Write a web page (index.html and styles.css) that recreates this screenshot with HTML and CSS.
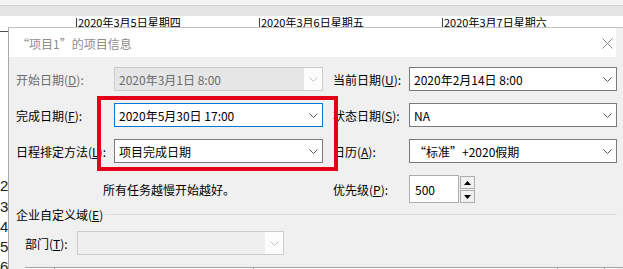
FILE: index.html
```html
<!DOCTYPE html>
<html lang="zh-CN">
<head>
    <meta charset="UTF-8" />
    <title>项目信息</title>
    <link rel="stylesheet" href="styles.css">
</head>
<body>
<div class="top-strip"></div>
<div class="top-band"></div>
<div class="timescale">
    <span class="tick-gap"></span>
    <span class="tick">2020年3月5日星期四</span>
    <span class="tick">2020年3月6日星期五</span>
    <span class="tick">2020年3月7日星期六</span>
    <span class="tick tick-last">2</span>
</div>

<div class="main">
    <div class="rowheads">
        <div class="rh-top"></div>
        <div class="rh-spacer"></div>
        <div class="rh rh-tall">2</div>
        <div class="rh rh-tall">3</div>
        <div class="rh">4</div>
        <div class="rh">5</div>
        <div class="rh">6</div>
    </div>

    <div class="dialog">
        <div class="titlebar">
            <span class="title">“项目1”的项目信息</span>
            <svg class="close" width="11" height="11" viewBox="0 0 11 11">
                <path d="M0.5 0.5 L10.5 10.5 M10.5 0.5 L0.5 10.5" stroke="#8a8a8a" stroke-width="1" fill="none"/>
            </svg>
        </div>

        <div class="dlg-body">
            <div class="form">
                <label class="lbl disabled-text">开始日期(<u>D</u>):</label>
                <div class="combo combo-disabled">
                    <span class="combo-val">2020年3月1日 8:00</span>
                    <span class="combo-btn">
                        <svg width="9" height="5" viewBox="0 0 9 5"><polyline points="0.5,0.5 4.5,4.5 8.5,0.5" fill="none" stroke="#c2c2c2"/></svg>
                    </span>
                </div>
                <span></span>
                <label class="lbl">当前日期(<u>U</u>):</label>
                <div class="combo">
                    <span class="combo-val">2020年2月14日 8:00</span>
                    <span class="combo-btn">
                        <svg width="9" height="5" viewBox="0 0 9 5"><polyline points="0.5,0.5 4.5,4.5 8.5,0.5" fill="none" stroke="#5a5a5a"/></svg>
                    </span>
                </div>

                <label class="lbl">完成日期(<u>F</u>):</label>
                <div class="combo combo-focus">
                    <span class="combo-val">2020年5月30日 17:00</span>
                    <span class="combo-btn">
                        <svg width="9" height="5" viewBox="0 0 9 5"><polyline points="0.5,0.5 4.5,4.5 8.5,0.5" fill="none" stroke="#5a5a5a"/></svg>
                    </span>
                </div>
                <span></span>
                <label class="lbl">状态日期(<u>S</u>):</label>
                <div class="combo">
                    <span class="combo-val">NA</span>
                    <span class="combo-btn">
                        <svg width="9" height="5" viewBox="0 0 9 5"><polyline points="0.5,0.5 4.5,4.5 8.5,0.5" fill="none" stroke="#5a5a5a"/></svg>
                    </span>
                </div>

                <label class="lbl">日程排定方法(<u>L</u>):</label>
                <div class="combo">
                    <span class="combo-val">项目完成日期</span>
                    <span class="combo-btn">
                        <svg width="9" height="5" viewBox="0 0 9 5"><polyline points="0.5,0.5 4.5,4.5 8.5,0.5" fill="none" stroke="#5a5a5a"/></svg>
                    </span>
                </div>
                <span></span>
                <label class="lbl">日历(<u>A</u>):</label>
                <div class="combo">
                    <span class="combo-val">“标准”+2020假期</span>
                    <span class="combo-btn">
                        <svg width="9" height="5" viewBox="0 0 9 5"><polyline points="0.5,0.5 4.5,4.5 8.5,0.5" fill="none" stroke="#5a5a5a"/></svg>
                    </span>
                </div>

                <div class="hint">所有任务越慢开始越好。</div>
                <span></span>
                <label class="lbl">优先级(<u>P</u>):</label>
                <div class="spin">
                    <div class="spin-input">500</div>
                    <div class="spin-btns">
                        <div class="spin-btn">
                            <svg width="7" height="4" viewBox="0 0 7 4"><polygon points="0,4 7,4 3.5,0" fill="#000"/></svg>
                        </div>
                        <div class="spin-btn">
                            <svg width="7" height="4" viewBox="0 0 7 4"><polygon points="0,0 7,0 3.5,4" fill="#000"/></svg>
                        </div>
                    </div>
                </div>
            </div>

            <div class="group">
                <span class="group-title">企业自定义域(<u>E</u>)</span>
                <span class="group-line"></span>
            </div>

            <div class="dept-row">
                <label class="lbl dept-lbl">部门(<u>T</u>):</label>
                <div class="combo combo-disabled dept-combo">
                    <span class="combo-val"></span>
                    <span class="combo-btn">
                        <svg width="9" height="5" viewBox="0 0 9 5"><polyline points="0.5,0.5 4.5,4.5 8.5,0.5" fill="none" stroke="#c2c2c2"/></svg>
                    </span>
                </div>
            </div>

            <div class="grid-head">
                <span class="gh" style="width: 29px"></span>
                <span class="gh" style="width: 199px"></span>
                <span class="gh" style="width: 304px"></span>
                <span class="gh" style="width: 47px"></span>
                <span class="gh" style="width: 13px"></span>
            </div>
        </div>

        <div class="annot"></div>
    </div>
</div>
</body>
</html>
```

FILE: styles.css
```css
body {
    margin: 0;
    width: 623px;
    height: 269px;
    overflow: hidden;
    background-color: #ffffff;
    font-family: "Noto Sans CJK SC", "Liberation Sans", sans-serif;
    font-size: 12px;
    color: #000000;
}

.top-strip {
    height: 5px;
    background-color: #f4f4f4;
    border-bottom: 1px solid #d2d2d2;
}

.top-band {
    height: 10px;
    background-color: #e5e5e5;
}

.timescale {
    display: flex;
    height: 11px;
    padding-top: 2px;
    box-sizing: border-box;
    white-space: nowrap;
}

.tick-gap {
    width: 76px;
    flex-shrink: 0;
}

.tick {
    width: 181px;
    flex-shrink: 0;
    border-left: 1px solid #404040;
    padding-left: 1px;
    font-size: 11px;
    line-height: 9px;
}

.tick-last {
    width: 2px;
    overflow: visible;
}

.main {
    display: flex;
}

.rowheads {
    width: 8px;
    flex-shrink: 0;
    background-color: #ffffff;
}

.rh-top {
    height: 4px;
    border-bottom: 1px solid #505050;
}

.rh-spacer {
    height: 143px;
}

.rh {
    height: 20px;
    line-height: 20px;
    text-align: right;
    font-family: "Liberation Sans", sans-serif;
    font-size: 15px;
    color: #202020;
    overflow: hidden;
}

.rh-tall {
    height: 21px;
    line-height: 21px;
}

.dialog {
    position: relative;
    width: 640px;
    flex-shrink: 0;
    border-top: 1px solid #c4c4c4;
    border-left: 1px solid #a8a8a8;
    background-color: #f0f0f0;
}

.titlebar {
    height: 29px;
    box-sizing: border-box;
    width: 607px;
    background-color: #ffffff;
    display: flex;
    align-items: center;
    padding-left: 8px;
}

.title {
    flex: 1;
    color: #8c8c8c;
    font-size: 12px;
    margin-top: 1px;
}

.close {
    margin-right: 3px;
    margin-top: 1px;
}

.dlg-body {
    padding: 10px 0 0 7px;
}

.form {
    display: grid;
    grid-template-columns: 98px 209px 10px 76px 208px;
    grid-template-rows: 24px 24px 24px 28px;
    row-gap: 12px;
    align-items: center;
}

.lbl {
    white-space: nowrap;
}

.disabled-text {
    color: #6d6d6d;
}

.combo {
    height: 24px;
    box-sizing: border-box;
    border: 1px solid #7a7a7a;
    background-color: #ffffff;
    display: flex;
    align-items: stretch;
}

.combo-val {
    flex: 1;
    padding-left: 4px;
    display: flex;
    align-items: center;
    white-space: nowrap;
    overflow: hidden;
}

.combo-btn {
    width: 18px;
    display: flex;
    align-items: center;
    justify-content: center;
}

.combo-focus {
    border-color: #0078d7;
}

.combo-disabled {
    border-color: #cccccc;
    background-color: #fcfcfc;
}

.combo-disabled .combo-val {
    background-color: #e6e6e6;
    color: #6d6d6d;
}

.hint {
    grid-column: 1 / 3;
    padding-left: 87px;
}

.spin {
    display: flex;
    gap: 1px;
    height: 28px;
}

.spin-input {
    width: 50px;
    box-sizing: border-box;
    border: 1px solid #adadad;
    background-color: #ffffff;
    padding-left: 5px;
    display: flex;
    align-items: center;
}

.spin-btns {
    display: flex;
    flex-direction: column;
    gap: 1px;
    padding-top: 1px;
}

.spin-btn {
    width: 15px;
    height: 13px;
    box-sizing: border-box;
    border: 1px solid #adadad;
    background-color: #f0f0f0;
    display: flex;
    align-items: center;
    justify-content: center;
}

.group {
    display: flex;
    align-items: center;
    height: 17px;
    margin-top: 3px;
    width: 601px;
}

.group-title {
    white-space: nowrap;
    padding-right: 2px;
}

.group-line {
    flex: 1;
    border-top: 1px solid #dcdcdc;
}

.dept-row {
    display: flex;
    align-items: center;
    margin-top: 8px;
    padding-left: 9px;
}

.dept-lbl {
    width: 52px;
}

.dept-combo {
    width: 207px;
}

.dept-combo .combo-val {
    background-color: #efefef;
}

.grid-head {
    display: flex;
    margin-top: 12px;
    margin-left: 9px;
    height: 10px;
    border-top: 1px solid #a0a0a0;
}

.gh {
    border-left: 1px solid #a0a0a0;
    box-sizing: border-box;
    background-color: #ffffff;
}

.gh:first-child {
    border-left: none;
}

.annot {
    position: absolute;
    left: 88px;
    top: 68px;
    width: 241px;
    height: 75px;
    box-sizing: border-box;
    border: 4px solid #e3001b;
}
```
